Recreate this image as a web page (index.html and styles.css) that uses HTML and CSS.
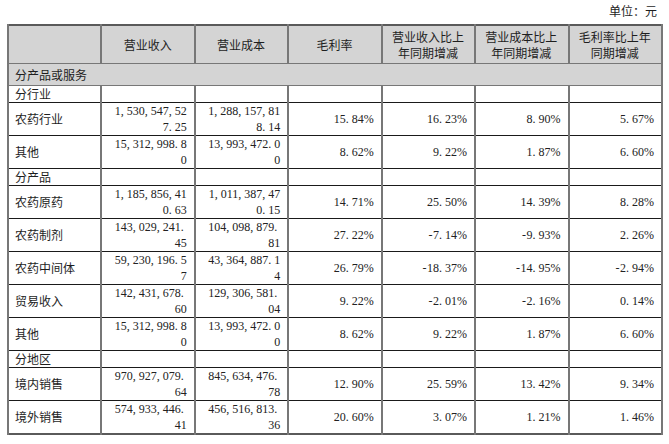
FILE: index.html
```html
<!DOCTYPE html>
<html lang="zh">
<head>
<meta charset="utf-8">
<link rel="stylesheet" href="styles.css">
</head>
<body>
<div class="unit">单位：元</div>
<table class="tbl">
<thead>
<tr><th></th><th>营业收入</th><th>营业成本</th><th>毛利率</th><th>营业收入比上<br>年同期增减</th><th>营业成本比上<br>年同期增减</th><th>毛利率比上年<br>同期增减</th></tr>
</thead>
<tbody>
<tr class="sec"><td colspan="7">分产品或服务</td></tr>
<tr class="sub"><td class="lbl">分行业</td><td></td><td></td><td></td><td></td><td></td><td></td></tr>
<tr><td class="lbl">农药行业</td>
<td class="n">1<span class="p">,</span>530<span class="p">,</span>547<span class="p">,</span>52<br>7<span class="p">.</span>25</td>
<td class="n">1<span class="p">,</span>288<span class="p">,</span>157<span class="p">,</span>81<br>8<span class="p">.</span>14</td>
<td class="n">15<span class="p">.</span>84%</td><td class="n">16<span class="p">.</span>23%</td><td class="n">8<span class="p">.</span>90%</td><td class="n">5<span class="p">.</span>67%</td></tr>
<tr><td class="lbl">其他</td>
<td class="n">15<span class="p">,</span>312<span class="p">,</span>998<span class="p">.</span>8<br>0</td>
<td class="n">13<span class="p">,</span>993<span class="p">,</span>472<span class="p">.</span>0<br>0</td>
<td class="n">8<span class="p">.</span>62%</td><td class="n">9<span class="p">.</span>22%</td><td class="n">1<span class="p">.</span>87%</td><td class="n">6<span class="p">.</span>60%</td></tr>
<tr class="sub"><td class="lbl">分产品</td><td></td><td></td><td></td><td></td><td></td><td></td></tr>
<tr><td class="lbl">农药原药</td>
<td class="n">1<span class="p">,</span>185<span class="p">,</span>856<span class="p">,</span>41<br>0<span class="p">.</span>63</td>
<td class="n">1<span class="p">,</span>011<span class="p">,</span>387<span class="p">,</span>47<br>0<span class="p">.</span>15</td>
<td class="n">14<span class="p">.</span>71%</td><td class="n">25<span class="p">.</span>50%</td><td class="n">14<span class="p">.</span>39%</td><td class="n">8<span class="p">.</span>28%</td></tr>
<tr><td class="lbl">农药制剂</td>
<td class="n">143<span class="p">,</span>029<span class="p">,</span>241<span class="p">.</span><br>45</td>
<td class="n">104<span class="p">,</span>098<span class="p">,</span>879<span class="p">.</span><br>81</td>
<td class="n">27<span class="p">.</span>22%</td><td class="n"><span class="m">-</span>7<span class="p">.</span>14%</td><td class="n"><span class="m">-</span>9<span class="p">.</span>93%</td><td class="n">2<span class="p">.</span>26%</td></tr>
<tr><td class="lbl">农药中间体</td>
<td class="n">59<span class="p">,</span>230<span class="p">,</span>196<span class="p">.</span>5<br>7</td>
<td class="n">43<span class="p">,</span>364<span class="p">,</span>887<span class="p">.</span>1<br>4</td>
<td class="n">26<span class="p">.</span>79%</td><td class="n"><span class="m">-</span>18<span class="p">.</span>37%</td><td class="n"><span class="m">-</span>14<span class="p">.</span>95%</td><td class="n"><span class="m">-</span>2<span class="p">.</span>94%</td></tr>
<tr><td class="lbl">贸易收入</td>
<td class="n">142<span class="p">,</span>431<span class="p">,</span>678<span class="p">.</span><br>60</td>
<td class="n">129<span class="p">,</span>306<span class="p">,</span>581<span class="p">.</span><br>04</td>
<td class="n">9<span class="p">.</span>22%</td><td class="n"><span class="m">-</span>2<span class="p">.</span>01%</td><td class="n"><span class="m">-</span>2<span class="p">.</span>16%</td><td class="n">0<span class="p">.</span>14%</td></tr>
<tr><td class="lbl">其他</td>
<td class="n">15<span class="p">,</span>312<span class="p">,</span>998<span class="p">.</span>8<br>0</td>
<td class="n">13<span class="p">,</span>993<span class="p">,</span>472<span class="p">.</span>0<br>0</td>
<td class="n">8<span class="p">.</span>62%</td><td class="n">9<span class="p">.</span>22%</td><td class="n">1<span class="p">.</span>87%</td><td class="n">6<span class="p">.</span>60%</td></tr>
<tr class="sub"><td class="lbl">分地区</td><td></td><td></td><td></td><td></td><td></td><td></td></tr>
<tr><td class="lbl">境内销售</td>
<td class="n">970<span class="p">,</span>927<span class="p">,</span>079<span class="p">.</span><br>64</td>
<td class="n">845<span class="p">,</span>634<span class="p">,</span>476<span class="p">.</span><br>78</td>
<td class="n">12<span class="p">.</span>90%</td><td class="n">25<span class="p">.</span>59%</td><td class="n">13<span class="p">.</span>42%</td><td class="n">9<span class="p">.</span>34%</td></tr>
<tr><td class="lbl">境外销售</td>
<td class="n">574<span class="p">,</span>933<span class="p">,</span>446<span class="p">.</span><br>41</td>
<td class="n">456<span class="p">,</span>516<span class="p">,</span>813<span class="p">.</span><br>36</td>
<td class="n">20<span class="p">.</span>60%</td><td class="n">3<span class="p">.</span>07%</td><td class="n">1<span class="p">.</span>21%</td><td class="n">1<span class="p">.</span>46%</td></tr>
</tbody>
</table>
</body>
</html>
```
FILE: styles.css
```css
html, body {
  margin: 0;
  padding: 0;
  background: #ffffff;
}
body {
  font-family: "Noto Sans CJK SC", sans-serif;
  font-size: 12px;
  color: #1e1e1e;
}
.unit {
  height: 24px;
  line-height: 22px;
  text-align: right;
  padding-right: 12px;
}
.tbl {
  border-collapse: collapse;
  table-layout: fixed;
  width: 656px;
  margin-left: 7px;
  border: 2px solid #5a5a5a;
}
.tbl th,
.tbl td {
  border-top: 1px solid #1a1a1a;
  border-bottom: 1px solid #1a1a1a;
  border-left: 2px solid #777777;
  border-right: 2px solid #777777;
  padding: 0 7px 0 6px;
  line-height: 16px;
  font-weight: normal;
  vertical-align: middle;
}
.tbl th {
  background: #d4d4d4;
  height: 37px;
  line-height: 15.5px;
  text-align: center;
  border-bottom: 1px solid #777777;
}
.tbl .sec td {
  background: #d4d4d4;
  height: 21px;
  border-bottom: 1px solid #777777;
}
.tbl .sub td {
  height: 16px;
}
.lbl {
  text-align: left;
}
.n {
  text-align: right;
  font-family: "Liberation Serif", serif;
  font-size: 12px;
  color: #222222;
}
.p {
  letter-spacing: 3px;
}
.m {
  letter-spacing: 0.5px;
}
```
